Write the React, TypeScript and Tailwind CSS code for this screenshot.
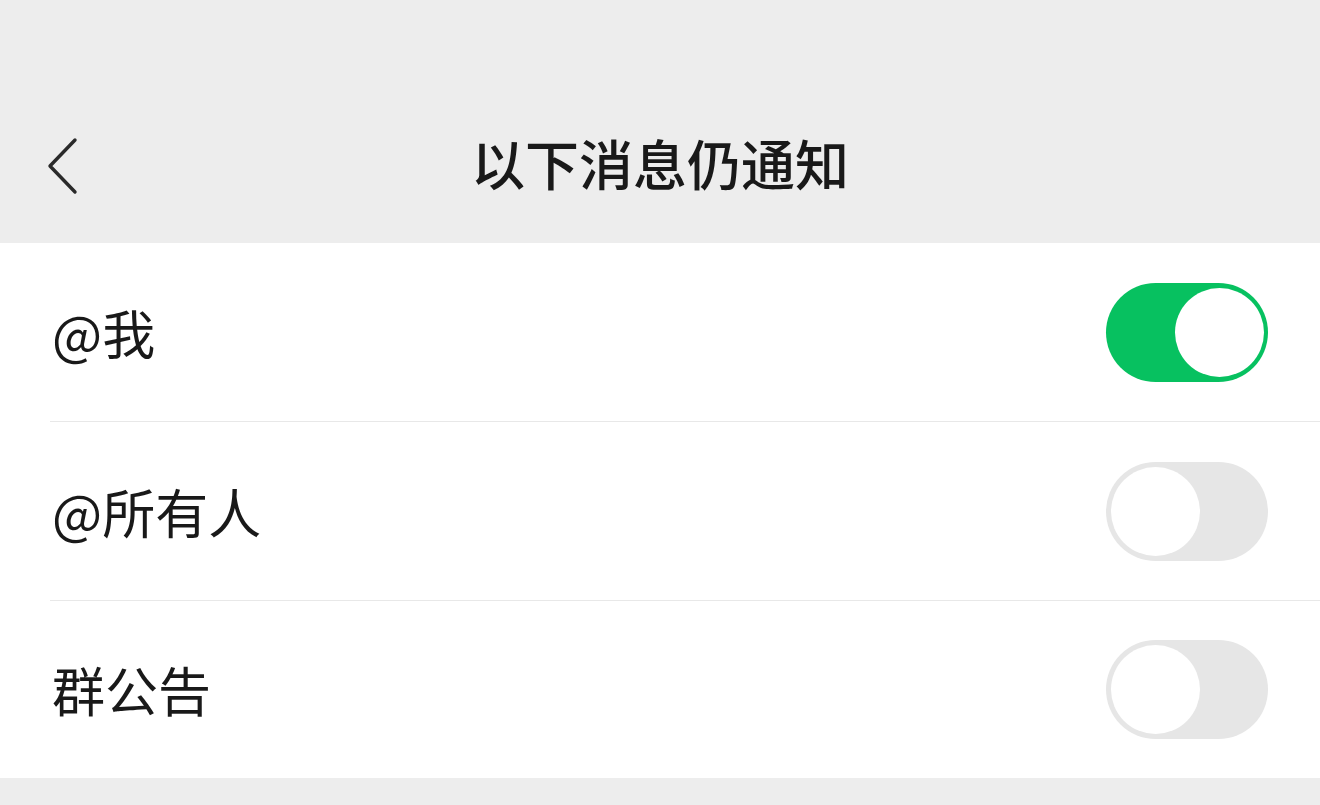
import { useState } from 'react'

const font = '"Noto Sans CJK SC", "Noto Sans", sans-serif'

function Toggle({ on, onClick }: { on: boolean; onClick: () => void }) {
  return (
    <button
      type="button"
      onClick={onClick}
      className={`relative h-[99px] w-[162px] shrink-0 rounded-full transition-colors ${
        on ? 'bg-[#07c160]' : 'bg-[#e6e6e6]'
      }`}
    >
      <span
        className={`absolute top-[5px] h-[89px] w-[89px] rounded-full bg-white transition-all ${
          on ? 'left-[69px]' : 'left-[5px]'
        }`}
      />
    </button>
  )
}

const rows = ['@我', '@所有人', '群公告']

export default function App() {
  const [state, setState] = useState<boolean[]>([true, false, false])

  const toggle = (i: number) => setState((s) => s.map((v, j) => (j === i ? !v : v)))

  return (
    <div className="h-[805px] w-full overflow-hidden bg-[#ededed]" style={{ fontFamily: font }}>
      {/* status bar spacer */}
      <div className="h-[89px]" />

      {/* nav bar */}
      <div className="relative flex h-[154px] items-center justify-center">
        <button type="button" className="absolute left-[40px] top-[44px] p-1">
          <svg width="36" height="58" viewBox="0 0 36 58" fill="none">
            <path d="M31 3 L6 29 L31 55" stroke="#2a2a2a" strokeWidth="3.4" strokeLinecap="round" strokeLinejoin="round" />
          </svg>
        </button>
        <h1 className="-mt-[6px] text-[54px] font-medium leading-none text-[#191919]">以下消息仍通知</h1>
      </div>

      {/* settings list */}
      <div className="bg-white pl-[50px]">
        {rows.map((label, i) => (
          <div
            key={label}
            className={`flex items-center justify-between pr-[52px] ${
              i < rows.length - 1 ? 'h-[179px] border-b border-[#e8e8e8]' : 'h-[177px]'
            }`}
          >
            <span className="pl-[2px] text-[53px] leading-none text-[#191919]">{label}</span>
            <Toggle on={state[i]} onClick={() => toggle(i)} />
          </div>
        ))}
      </div>
    </div>
  )
}
